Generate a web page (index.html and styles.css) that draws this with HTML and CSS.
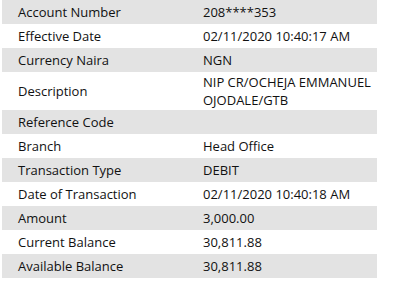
FILE: index.html
```html
<!DOCTYPE html>
<html>
<head>
<meta charset="utf-8">
<link rel="stylesheet" href="styles.css">
</head>
<body>
<div class="table">
  <div class="row shade"><div class="label">Account Number</div><div class="value">208****353</div></div>
  <div class="row"><div class="label">Effective Date</div><div class="value">02/11/2020 10:40:17 AM</div></div>
  <div class="row shade"><div class="label">Currency Naira</div><div class="value">NGN</div></div>
  <div class="row tall"><div class="label">Description</div><div class="value">NIP CR/OCHEJA EMMANUEL OJODALE/GTB</div></div>
  <div class="row shade"><div class="label">Reference Code</div><div class="value"></div></div>
  <div class="row"><div class="label">Branch</div><div class="value">Head Office</div></div>
  <div class="row shade"><div class="label">Transaction Type</div><div class="value">DEBIT</div></div>
  <div class="row"><div class="label">Date of Transaction</div><div class="value">02/11/2020 10:40:18 AM</div></div>
  <div class="row shade"><div class="label">Amount</div><div class="value">3,000.00</div></div>
  <div class="row"><div class="label">Current Balance</div><div class="value">30,811.88</div></div>
  <div class="row shade"><div class="label">Available Balance</div><div class="value">30,811.88</div></div>
</div>
</body>
</html>
```

FILE: styles.css
```css
html, body {
  margin: 0;
  padding: 0;
  background: #ffffff;
}
body {
  font-family: "Open Sans", "Liberation Sans", sans-serif;
  font-size: 13px;
  color: #111111;
}
.table {
  margin-left: 2px;
  width: 375px;
  display: flex;
  flex-direction: column;
}
.row {
  display: grid;
  grid-template-columns: 185px 190px;
  align-items: center;
  height: 24px;
  line-height: 18px;
}
.row.tall {
  height: 38px;
}
.shade {
  background: #e3e3e3;
}
.label {
  padding-left: 16px;
}
.value {
  padding-left: 16px;
  padding-right: 2px;
}
```
